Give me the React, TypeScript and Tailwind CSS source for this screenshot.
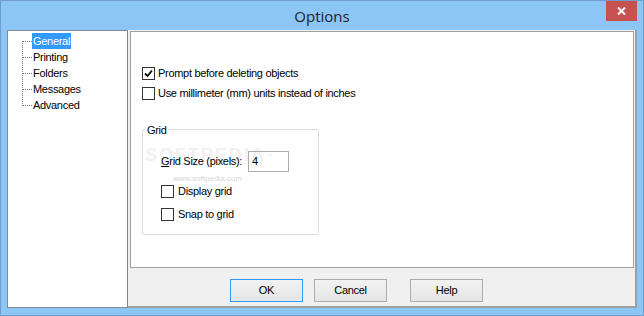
import React from 'react';

const Check: React.FC<{ checked?: boolean }> = ({ checked }) => (
  <div className="w-[13px] h-[13px] border border-[#333333] bg-white flex items-center justify-center shrink-0">
    {checked && (
      <svg width="9" height="9" viewBox="0 0 9 9">
        <path d="M1 4.5 L3.5 7 L8 1.5" fill="none" stroke="#000" strokeWidth="1.8" />
      </svg>
    )}
  </div>
);

const Button: React.FC<{ label: string; focused?: boolean; className?: string }> = ({ label, focused, className }) => (
  <div
    className={`w-[73px] h-[23px] border flex items-center justify-center bg-gradient-to-b from-[#f2f2f2] to-[#e5e5e5] ${
      focused ? 'border-[#3399ff]' : 'border-[#acacac]'
    } ${className ?? ''}`}
  >
    {label}
  </div>
);

const treeItems = ['General', 'Printing', 'Folders', 'Messages', 'Advanced'];

export default function App() {
  return (
    <div className="w-[644px] h-[316px] bg-[#8bc6f7] border border-[#6e9ccb] flex flex-col font-['Liberation_Sans',Arial,sans-serif] text-[11px] tracking-[-0.3px] text-black">
      {/* title bar */}
      <div className="relative h-[29px] flex items-center justify-center">
        <span className="font-['Segoe_UI','Open_Sans',sans-serif] text-[15px] tracking-normal text-[#222] pt-[1px]">Options</span>
        <div className="absolute right-[6px] top-0 w-[31px] h-[20px] bg-[#c75050] flex items-center justify-center">
          <svg width="9" height="8" viewBox="0 0 9 8">
            <path d="M1 0.5 L8 7.5 M8 0.5 L1 7.5" stroke="#fff" strokeWidth="2" />
          </svg>
        </div>
      </div>

      {/* client */}
      <div className="flex flex-1 pl-[6px] pr-[6px] pb-[7px]">
        {/* tree */}
        <div className="relative w-[121px] bg-white border border-[#828790] pt-[2px]">
          <div className="absolute left-[14px] top-[10px] h-[65px] border-l border-dotted border-[#7a7a7a]" />
          {treeItems.map((item, i) => (
            <div key={item} className="flex items-center h-[16px]">
              <div className="ml-[15px] w-[9px] border-t border-dotted border-[#7a7a7a]" />
              <span
                className={`px-[1px] h-[16px] leading-[16px] ${i === 0 ? 'bg-[#3399ff] text-white' : ''}`}
              >
                {item}
              </span>
            </div>
          ))}
        </div>

        {/* right side */}
        <div className="flex-1 flex flex-col bg-[#f0f0f0] border-r-2 border-b-2 border-[#a0a0a0]">
          <div className="h-[237px] mt-[1px] ml-[2px] mr-[1px] bg-white border border-[#a0a0a0] pl-[11px] pt-[31px]">
            <div className="flex items-center gap-[3px] h-[20px]">
              <Check checked />
              <span>Prompt before deleting objects</span>
            </div>
            <div className="flex items-center gap-[3px] h-[20px]">
              <Check />
              <span>Use millimeter (mm) units instead of inches</span>
            </div>

            {/* group box */}
            <div className="relative mt-[26px] w-[177px] h-[106px] border border-[#dcdcdc] rounded-[2px] pl-[18px] pt-[21px]">
              <span className="absolute left-[3px] top-[-8px] bg-white px-[1px]">Grid</span>
              <div className="absolute left-[2px] top-[16px] leading-none font-['Liberation_Sans',sans-serif] font-bold text-[18px] tracking-[2px] text-[#f1f1f1] pointer-events-none">
                SOFTPEDIA<sup className="text-[6px] tracking-normal">™</sup>
              </div>
              <div className="absolute left-[30px] top-[45px] leading-none text-[8px] tracking-normal text-[#d6d6d6] pointer-events-none">
                www.softpedia.com
              </div>
              <div className="relative flex items-center h-[21px]">
                <span>
                  <u>G</u>rid Size (pixels):
                </span>
                <div className="ml-[6px] w-[41px] h-[21px] border border-[#abadb3] pl-[3px] flex items-center">
                  4
                </div>
              </div>
              <div className="relative flex items-center gap-[4px] h-[20px] mt-[9px]">
                <Check />
                <span>Display grid</span>
              </div>
              <div className="relative flex items-center gap-[4px] h-[20px] mt-[3px]">
                <Check />
                <span>Snap to grid</span>
              </div>
            </div>
          </div>

          {/* buttons */}
          <div className="flex pl-[102px] pt-[11px]">
            <Button label="OK" focused />
            <Button label="Cancel" className="ml-[11px]" />
            <Button label="Help" className="ml-[23px]" />
          </div>
        </div>
      </div>
    </div>
  );
}
